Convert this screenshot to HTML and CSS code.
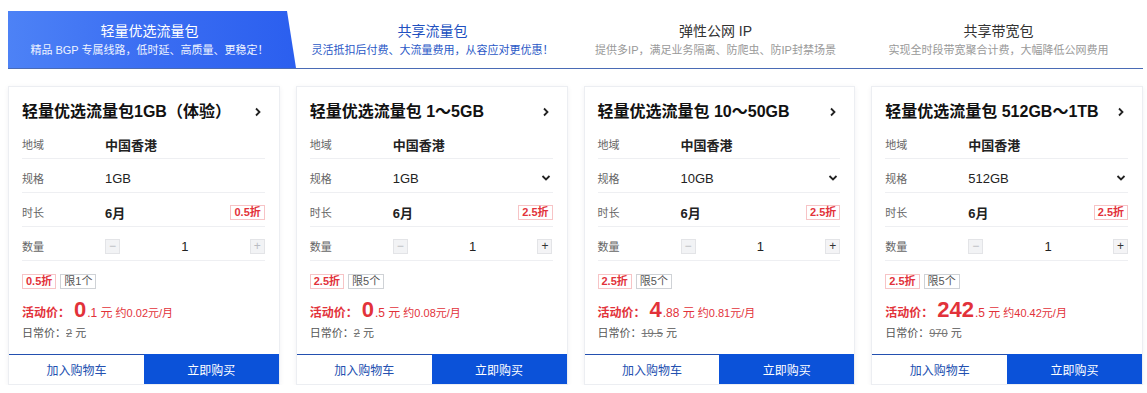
FILE: index.html
```html
<!DOCTYPE html>
<html lang="zh-CN">
<head>
<meta charset="utf-8">
<title>轻量优选流量包</title>
<link rel="stylesheet" href="styles.css">
</head>
<body>
<div class="page">
  <div class="tabs">
    <div class="tab active">
      <div class="tab-title">轻量优选流量包</div>
      <div class="tab-sub">精品 BGP 专属线路，低时延、高质量、更稳定！</div>
    </div>
    <div class="tab hot">
      <div class="tab-title">共享流量包</div>
      <div class="tab-sub">灵活抵扣后付费、大流量费用，从容应对更优惠！</div>
    </div>
    <div class="tab">
      <div class="tab-title">弹性公网 IP</div>
      <div class="tab-sub">提供多IP，满足业务隔离、防爬虫、防IP封禁场景</div>
    </div>
    <div class="tab">
      <div class="tab-title">共享带宽包</div>
      <div class="tab-sub">实现全时段带宽聚合计费，大幅降低公网费用</div>
    </div>
  </div>

  <div class="cards">
    <div class="card">
      <div class="card-head"><h3>轻量优选流量包1GB（体验）</h3><svg class="chev" viewBox="0 0 8 10" width="8" height="10"><path d="M2 1.5 L5.5 5 L2 8.5" fill="none" stroke="#222" stroke-width="1.8"/></svg></div>
      <div class="row"><span class="label">地域</span><span class="val b">中国香港</span></div>
      <div class="row"><span class="label">规格</span><span class="val">1GB</span></div>
      <div class="row"><span class="label">时长</span><span class="val b">6月</span><span class="tag red">0.5折</span></div>
      <div class="row"><span class="label">数量</span><div class="qty"><span class="qbtn">−</span><span class="qnum">1</span><span class="qbtn">+</span></div></div>
      <div class="tags"><span class="tag red">0.5折</span><span class="tag grey">限1个</span></div>
      <div class="price"><span class="p-label">活动价：</span><span class="p-int">0</span><span class="p-dec">.1 元</span><span class="p-month">约0.02元/月</span></div>
      <div class="orig">日常价：<s>2</s> 元</div>
      <div class="actions"><button class="cart">加入购物车</button><button class="buy">立即购买</button></div>
    </div>

    <div class="card">
      <div class="card-head"><h3>轻量优选流量包 1～5GB</h3><svg class="chev" viewBox="0 0 8 10" width="8" height="10"><path d="M2 1.5 L5.5 5 L2 8.5" fill="none" stroke="#222" stroke-width="1.8"/></svg></div>
      <div class="row"><span class="label">地域</span><span class="val b">中国香港</span></div>
      <div class="row"><span class="label">规格</span><span class="val">1GB</span><svg class="down" viewBox="0 0 10 8" width="10" height="8"><path d="M1.5 2 L5 5.5 L8.5 2" fill="none" stroke="#222" stroke-width="1.8"/></svg></div>
      <div class="row"><span class="label">时长</span><span class="val b">6月</span><span class="tag red">2.5折</span></div>
      <div class="row"><span class="label">数量</span><div class="qty"><span class="qbtn">−</span><span class="qnum">1</span><span class="qbtn on">+</span></div></div>
      <div class="tags"><span class="tag red">2.5折</span><span class="tag grey">限5个</span></div>
      <div class="price"><span class="p-label">活动价：</span><span class="p-int">0</span><span class="p-dec">.5 元</span><span class="p-month">约0.08元/月</span></div>
      <div class="orig">日常价：<s>2</s> 元</div>
      <div class="actions"><button class="cart">加入购物车</button><button class="buy">立即购买</button></div>
    </div>

    <div class="card">
      <div class="card-head"><h3>轻量优选流量包 10～50GB</h3><svg class="chev" viewBox="0 0 8 10" width="8" height="10"><path d="M2 1.5 L5.5 5 L2 8.5" fill="none" stroke="#222" stroke-width="1.8"/></svg></div>
      <div class="row"><span class="label">地域</span><span class="val b">中国香港</span></div>
      <div class="row"><span class="label">规格</span><span class="val">10GB</span><svg class="down" viewBox="0 0 10 8" width="10" height="8"><path d="M1.5 2 L5 5.5 L8.5 2" fill="none" stroke="#222" stroke-width="1.8"/></svg></div>
      <div class="row"><span class="label">时长</span><span class="val b">6月</span><span class="tag red">2.5折</span></div>
      <div class="row"><span class="label">数量</span><div class="qty"><span class="qbtn">−</span><span class="qnum">1</span><span class="qbtn on">+</span></div></div>
      <div class="tags"><span class="tag red">2.5折</span><span class="tag grey">限5个</span></div>
      <div class="price"><span class="p-label">活动价：</span><span class="p-int">4</span><span class="p-dec">.88 元</span><span class="p-month">约0.81元/月</span></div>
      <div class="orig">日常价：<s>19.5</s> 元</div>
      <div class="actions"><button class="cart">加入购物车</button><button class="buy">立即购买</button></div>
    </div>

    <div class="card">
      <div class="card-head"><h3>轻量优选流量包 512GB～1TB</h3><svg class="chev" viewBox="0 0 8 10" width="8" height="10"><path d="M2 1.5 L5.5 5 L2 8.5" fill="none" stroke="#222" stroke-width="1.8"/></svg></div>
      <div class="row"><span class="label">地域</span><span class="val b">中国香港</span></div>
      <div class="row"><span class="label">规格</span><span class="val">512GB</span><svg class="down" viewBox="0 0 10 8" width="10" height="8"><path d="M1.5 2 L5 5.5 L8.5 2" fill="none" stroke="#222" stroke-width="1.8"/></svg></div>
      <div class="row"><span class="label">时长</span><span class="val b">6月</span><span class="tag red">2.5折</span></div>
      <div class="row"><span class="label">数量</span><div class="qty"><span class="qbtn">−</span><span class="qnum">1</span><span class="qbtn on">+</span></div></div>
      <div class="tags"><span class="tag red">2.5折</span><span class="tag grey">限5个</span></div>
      <div class="price"><span class="p-label">活动价：</span><span class="p-int">242</span><span class="p-dec">.5 元</span><span class="p-month">约40.42元/月</span></div>
      <div class="orig">日常价：<s>970</s> 元</div>
      <div class="actions"><button class="cart">加入购物车</button><button class="buy">立即购买</button></div>
    </div>
  </div>
</div>
</body>
</html>
```

FILE: styles.css
```css
* { box-sizing: border-box; }
html, body { margin: 0; padding: 0; background: #fff; }
body {
  font-family: "Liberation Sans", "Noto Sans CJK SC", sans-serif;
  color: #222;
}
.page {
  width: 1135px;
  margin-left: 8px;
  padding-top: 11px;
}

/* tabs */
.tabs {
  display: grid;
  grid-template-columns: repeat(4, 283px);
  height: 58px;
  border-bottom: 1px solid #4a6bb5;
}
.tab {
  position: relative;
  text-align: center;
  padding-top: 11px;
}
.tab.active::before {
  content: "";
  position: absolute;
  left: 0; top: 0; bottom: 0;
  width: 288px;
  background: linear-gradient(90deg, #4d82f6 0%, #3a6df2 50%, #2b5fef 100%);
  clip-path: polygon(0 0, 279px 0, 288px 100%, 0 100%);
}
.tab-title, .tab-sub { position: relative; }
.tab-title {
  font-size: 14px;
  line-height: 18px;
  color: #333;
}
.tab-sub {
  margin-top: 3px;
  font-size: 11px;
  line-height: 15px;
  color: #999;
}
.tab.active .tab-title { color: #fff; }
.tab.active .tab-sub { color: #eef3ff; }
.tab.hot .tab-title { color: #2050c0; }
.tab.hot .tab-sub { color: #2a58c6; }

/* cards */
.cards {
  display: grid;
  grid-template-columns: repeat(4, 1fr);
  gap: 16px;
  margin-top: 17px;
}
.card {
  border: 1px solid #eceef2;
  box-shadow: 0 1px 5px rgba(30, 40, 70, 0.06);
  background: #fff;
  display: flex;
  flex-direction: column;
}
.card-head {
  display: flex;
  align-items: center;
  justify-content: space-between;
  padding: 12px 17px 0 13px;
  height: 38px;
}
.card-head h3 {
  margin: 0;
  font-size: 16px;
  line-height: 24px;
  font-weight: bold;
  color: #111;
}
.chev { display: block; }

.row {
  display: grid;
  grid-template-columns: 83px 1fr auto;
  align-items: center;
  margin: 0 14px 0 13px;
  height: 34px;
  padding-top: 5px;
  border-bottom: 1px solid #eeeff2;
}
.label {
  font-size: 11px;
  color: #666;
}
.val {
  font-size: 13px;
  color: #222;
}
.val.b { font-weight: bold; }
.down { display: block; margin-right: 2px; }

.tag {
  display: inline-block;
  font-size: 11px;
  line-height: 13px;
  padding: 0 3px;
  border: 1px solid;
}
.tag.red { color: #e2323a; border-color: #f7c4c6; font-weight: bold; }
.tag.grey { color: #555; border-color: #cfd2d6; }

.qty {
  grid-column: 2 / 4;
  display: flex;
  align-items: center;
  justify-content: space-between;
}
.qbtn {
  width: 15px;
  height: 15px;
  background: #f2f3f5;
  border: 1px solid #e3e4e7;
  color: #b9bcc2;
  font-size: 12px;
  line-height: 13px;
  text-align: center;
}
.qbtn.on { color: #333; background: #f4f4f6; }
.qnum { font-size: 13px; color: #222; }

.tags {
  display: flex;
  gap: 4px;
  padding: 13px 13px 0;
}

.price {
  display: flex;
  align-items: baseline;
  padding: 8px 13px 0;
  color: #e2323a;
  height: 34px;
}
.p-label { font-size: 12px; font-weight: bold; }
.p-int { font-size: 22px; font-weight: bold; margin-left: 4px; }
.p-dec { font-size: 12px; margin-left: 1px; }
.p-month { font-size: 11px; margin-left: 3px; }

.orig {
  padding: 3px 13px 0;
  font-size: 11px;
  line-height: 14px;
  color: #555;
}
.orig s { color: #777; }

.actions {
  display: grid;
  grid-template-columns: 1fr 1fr;
  margin-top: 14px;
  height: 30px;
}
.actions button {
  font-family: inherit;
  font-size: 12px;
  border: 0;
  margin: 0;
  padding: 0;
  cursor: pointer;
}
.cart {
  background: #fff;
  color: #2350b0;
  border-top: 1px solid #2350b0 !important;
}
.buy {
  background: #0b52d9;
  color: #fff;
}
```
